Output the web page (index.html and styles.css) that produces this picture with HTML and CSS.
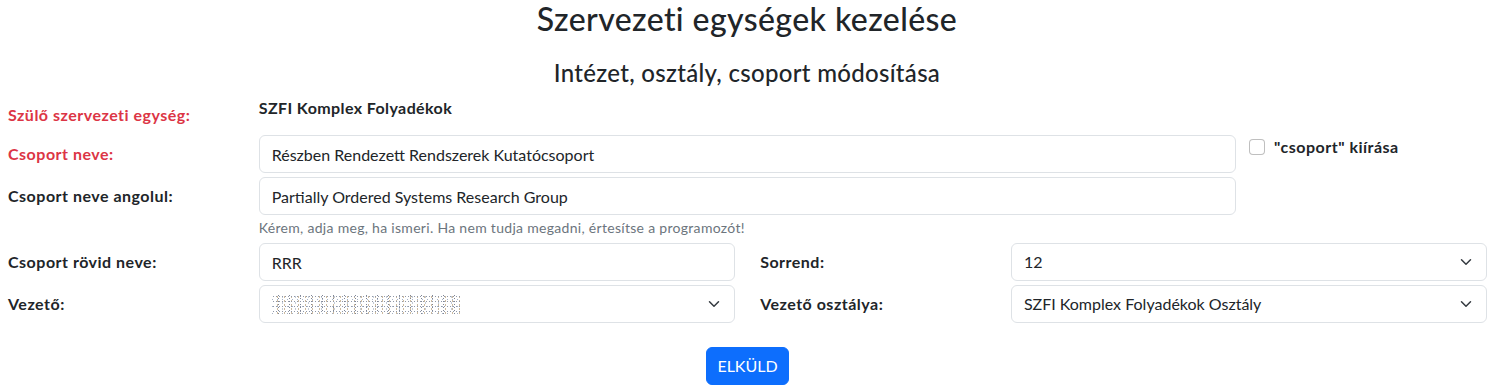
FILE: index.html
```html
<!DOCTYPE html>
<html lang="hu">
<head>
    <meta charset="UTF-8">
    <meta name="viewport" content="width=device-width, initial-scale=1.0">
    <title>Szervezeti egységek kezelése</title>
    <link rel="stylesheet" href="styles.css">
</head>
<body>
    <div class="page">
        <h2 class="title">Szervezeti egységek kezelése</h2>
        <h4 class="subtitle">Intézet, osztály, csoport módosítása</h4>

        <form class="unit-form" onsubmit="return false">
            <div class="form-row row-parent">
                <label class="col-label required">Szülő szervezeti egység:</label>
                <div class="static-value">SZFI Komplex Folyadékok</div>
            </div>

            <div class="form-row">
                <label class="col-label required" for="nev">Csoport neve:</label>
                <input class="form-control wide" id="nev" type="text" value="Részben Rendezett Rendszerek Kutatócsoport">
                <div class="form-check">
                    <span class="check-box"></span>
                    <label class="check-label">"csoport" kiírása</label>
                </div>
            </div>

            <div class="form-row">
                <label class="col-label" for="nev-en">Csoport neve angolul:</label>
                <div class="wide">
                    <input class="form-control" id="nev-en" type="text" value="Partially Ordered Systems Research Group">
                    <div class="form-text">Kérem, adja meg, ha ismeri. Ha nem tudja megadni, értesítse a programozót!</div>
                </div>
            </div>

            <div class="form-row">
                <label class="col-label" for="rovid">Csoport rövid neve:</label>
                <input class="form-control half" id="rovid" type="text" value="RRR">
                <label class="col-label">Sorrend:</label>
                <div class="form-select half">
                    <span>12</span>
                    <svg class="chevron" viewBox="0 0 16 16" width="16" height="12"><path d="M2 5l6 6 6-6" fill="none" stroke="#343a40" stroke-width="2" stroke-linecap="round" stroke-linejoin="round"/></svg>
                </div>
            </div>

            <div class="form-row">
                <label class="col-label">Vezető:</label>
                <div class="form-select half">
                    <span class="redacted"></span>
                    <svg class="chevron" viewBox="0 0 16 16" width="16" height="12"><path d="M2 5l6 6 6-6" fill="none" stroke="#343a40" stroke-width="2" stroke-linecap="round" stroke-linejoin="round"/></svg>
                </div>
                <label class="col-label">Vezető osztálya:</label>
                <div class="form-select half">
                    <span>SZFI Komplex Folyadékok Osztály</span>
                    <svg class="chevron" viewBox="0 0 16 16" width="16" height="12"><path d="M2 5l6 6 6-6" fill="none" stroke="#343a40" stroke-width="2" stroke-linecap="round" stroke-linejoin="round"/></svg>
                </div>
            </div>

            <div class="actions">
                <button class="btn-primary" type="submit">ELKÜLD</button>
            </div>
        </form>
    </div>
</body>
</html>
```

FILE: styles.css
```css
* {
    margin: 0;
    padding: 0;
    box-sizing: border-box;
}

body {
    font-family: Lato, 'Liberation Sans', sans-serif;
    font-size: 16px;
    line-height: 1.5;
    color: #212529;
    background: #fff;
}

.title {
    text-align: center;
    font-size: 32px;
    font-weight: 500;
    line-height: 1.2;
    letter-spacing: 0.4px;
}

.subtitle {
    text-align: center;
    font-size: 24px;
    font-weight: 500;
    line-height: 1.2;
    letter-spacing: 0.3px;
    margin-top: 21px;
    margin-bottom: 8px;
}

.unit-form {
    padding: 0 7px 0 8px;
}

.form-row {
    display: grid;
    grid-template-columns: repeat(12, 1fr);
    column-gap: 25.33px;
    align-items: start;
    margin-bottom: 4px;
}

.row-parent {
    margin-bottom: 1px;
}

.col-label {
    grid-column: span 2;
    padding: 7px 0;
    font-weight: 700;
    letter-spacing: 0.5px;
}

.required {
    color: #dc3545;
}

.static-value {
    grid-column: span 8;
    font-weight: 700;
    letter-spacing: 0.4px;
}

.wide {
    grid-column: span 8;
}

.half {
    grid-column: span 4;
}

.form-control,
.form-select {
    display: block;
    width: 100%;
    height: 38px;
    padding: 6px 12px;
    font: inherit;
    line-height: 1.5;
    color: #212529;
    background: #fff;
    border: 1px solid #dee2e6;
    border-radius: 6px;
}

.form-select {
    display: flex;
    align-items: center;
    justify-content: space-between;
}

.chevron {
    flex-shrink: 0;
}

/* blurred-out name */
.redacted {
    display: inline-block;
    width: 188px;
    height: 20px;
    background:
        radial-gradient(circle, #7d8799 0.6px, transparent 1px) 0 0 / 3px 5px,
        radial-gradient(circle, #c4ae8f 0.5px, transparent 0.9px) 2px 1px / 7px 4px,
        radial-gradient(circle, #98a6bd 0.6px, transparent 1px) 3px 2px / 5px 7px,
        radial-gradient(circle, #6a7283 0.5px, transparent 0.9px) 1px 3px / 11px 3px,
        radial-gradient(circle, #b9c2cf 0.6px, transparent 1px) 4px 0 / 13px 6px;
    opacity: 0.85;
}

.form-text {
    margin-top: 2px;
    margin-bottom: 1px;
    font-size: 14px;
    line-height: 21px;
    letter-spacing: 0.3px;
    color: #6c757d;
}

.form-check {
    grid-column: span 2;
    display: flex;
    align-items: flex-start;
    gap: 9px;
    margin-left: -12.5px;
}

.check-box {
    flex-shrink: 0;
    width: 16px;
    height: 16px;
    margin-top: 4px;
    border: 1px solid rgba(0, 0, 0, 0.25);
    border-radius: 4px;
    background: #fff;
}

.check-label {
    font-weight: 700;
    letter-spacing: 0.5px;
}

.actions {
    display: flex;
    justify-content: center;
    margin-top: 24px;
}

.btn-primary {
    padding: 6px 10px;
    font: inherit;
    line-height: 1.5;
    color: #fff;
    background: #0d6efd;
    border: 1px solid #0d6efd;
    border-radius: 6px;
    cursor: pointer;
}
```
